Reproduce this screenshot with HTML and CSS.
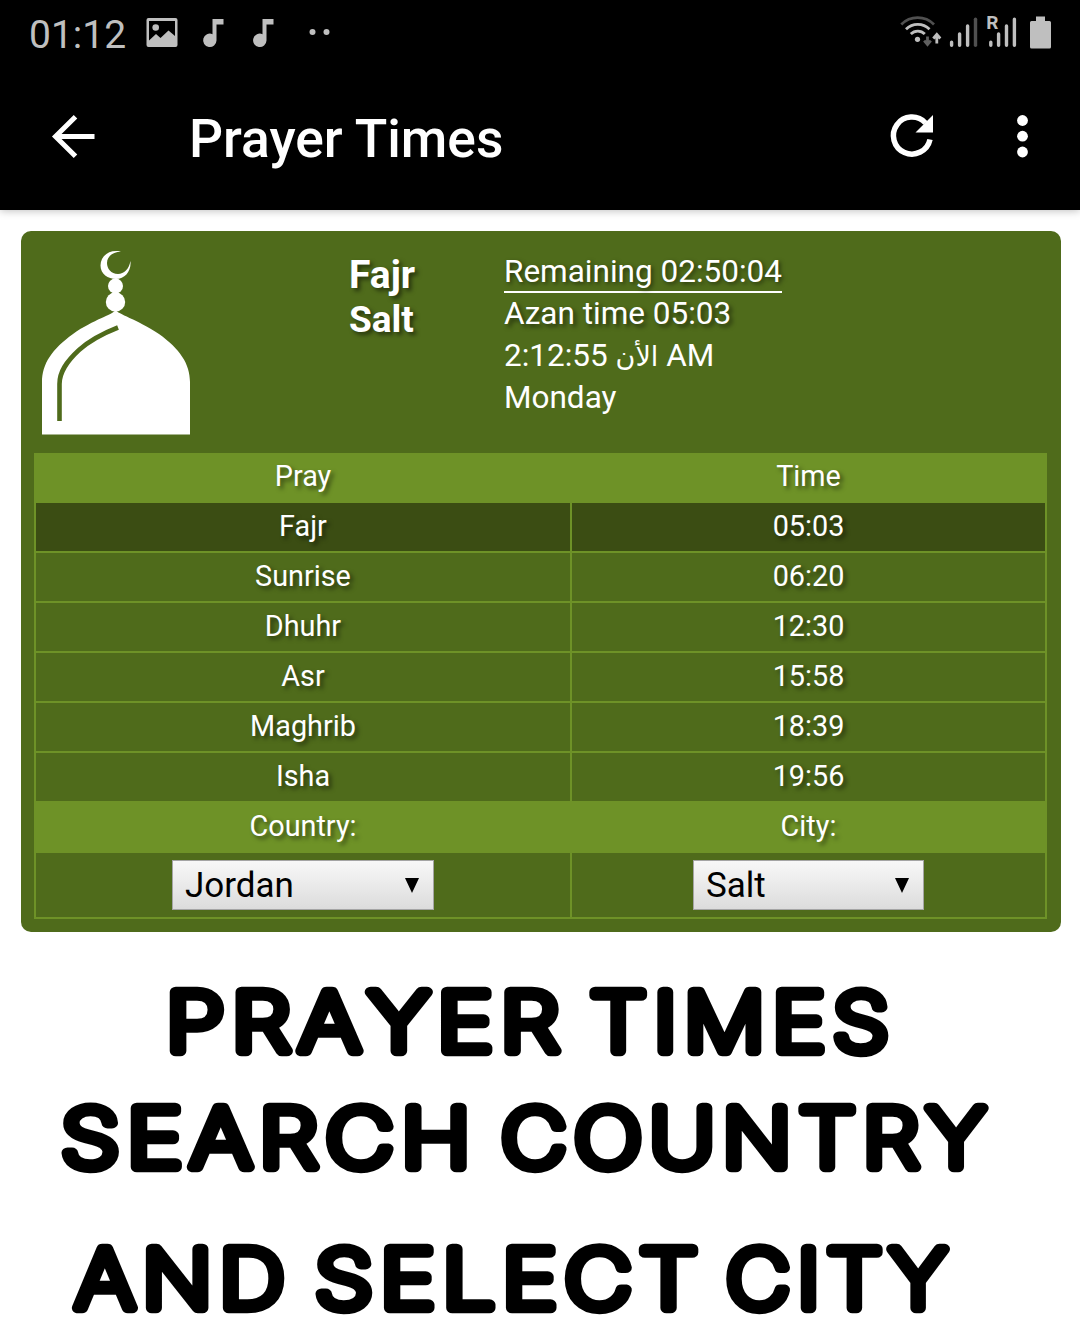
FILE: index.html
```
<!DOCTYPE html>
<html lang="en">
<head>
    <meta charset="UTF-8">
    <meta name="viewport" content="width=device-width, initial-scale=1.0">
    <title>Prayer Times</title>
    <link rel="stylesheet" href="styles.css">
</head>
<body>
    <header class="header">
        <div class="status-bar">
            <span class="clock">01:12</span>
            <svg class="icon-picture" width="32" height="30" viewBox="0 0 32 30">
                <path fill-rule="evenodd" d="M2.500 0h27a2 2 0 0 1 2 2v25a2 2 0 0 1-2 2h-27a2 2 0 0 1-2-2v-25a2 2 0 0 1 2-2zM3 3v19.500l7-6.500 4.500 4 8-7.500 6.500 5.500v-15z"/>
                <circle cx="9.700" cy="9.500" r="3.300"/>
            </svg>
            <svg class="icon-note" width="21" height="29" viewBox="0 0 21 29">
                <path d="M9.500 0h11v5.500h-7v16a6.700 6.700 0 1 1-4-6.300z"/>
            </svg>
            <svg class="icon-note" width="21" height="29" viewBox="0 0 21 29">
                <path d="M9.500 0h11v5.500h-7v16a6.700 6.700 0 1 1-4-6.300z"/>
            </svg>
            <svg class="icon-more" width="21" height="8" viewBox="0 0 21 8">
                <circle cx="3.500" cy="4" r="3"/>
                <circle cx="17.500" cy="4" r="3"/>
            </svg>
            <svg class="icon-signal" width="156" height="38" viewBox="0 0 156 38">
                <!-- wifi -->
                <g fill="none" stroke="#bfbfbf" stroke-width="2.800">
                    <path stroke="#505050" d="M1.300 11.500a23 23 0 0 1 32.700 0"/>
                    <path d="M6 16.300a16.500 16.500 0 0 1 23.500 0"/>
                    <path d="M10.800 21a9.800 9.800 0 0 1 14 0"/>
                    <path stroke="#606060" d="M27.500 23.500v8.500m-3.300-4.300 3.300 3.800 3.300-3.800"/>
                    <path d="M36.800 30.500v-9m-3.500 4 3.500-4 3.500 4"/>
                </g>
                <circle cx="17.500" cy="26.300" r="2.600"/>
                <!-- sim 1 and 2 -->
                <g stroke="#bfbfbf" stroke-width="3.400" stroke-linecap="round">
                    <path d="M51.600 29.300v3M59.600 21v11.300M67.600 13v19.300"/>
                    <path stroke="#505050" d="M75.500 6.300v26"/>
                    <path d="M90.800 29.300v3M98.600 21v11.300M106.500 13v19.300M114.400 6.300v26"/>
                </g>
                <text class="roaming" x="86.200" y="16">R</text>
                <!-- battery -->
                <path d="M136 3.500h9v4.500h4.500a1.500 1.500 0 0 1 1.500 1.500v24.500a1.500 1.500 0 0 1-1.500 1.500h-18a1.500 1.500 0 0 1-1.500-1.500v-24.500a1.500 1.500 0 0 1 1.500-1.500h4.500z"/>
            </svg>
        </div>
        <div class="app-bar">
            <svg class="back" width="43" height="43" viewBox="0 0 43 43">
                <path d="M23.500 1.700 3.500 21.500l20 19.800M3.500 21.500h39" fill="none" stroke="#fff" stroke-width="5"/>
            </svg>
            <h1 class="title">Prayer Times</h1>
            <svg class="refresh" width="44" height="44" viewBox="0 0 44 44">
                <path d="M40 25.500a18.500 18.500 0 1 1-4.500-16.500" fill="none" stroke="#fff" stroke-width="5.500"/>
                <path d="M43 1v17.500H25.500z" fill="#fff"/>
            </svg>
            <svg class="menu" width="12" height="44" viewBox="0 0 12 44">
                <circle cx="5.500" cy="6.500" r="5.400"/>
                <circle cx="5.500" cy="22.200" r="5.400"/>
                <circle cx="5.500" cy="38" r="5.400"/>
            </svg>
        </div>
    </header>

    <main class="card">
        <section class="summary">
            <svg class="mosque" width="148" height="185" viewBox="0 0 148 185">
                <path d="M79 1.500C66-1 58.500 7 58.500 15.500C58.500 24 66 29 74 29C83 29 89.500 21 88.500 11C87 19 82 24 76 24C69 24 65 18.500 65 13C65 7 70 2 79 1.500z"/>
                <circle cx="73.500" cy="36" r="7.500"/>
                <circle cx="73.500" cy="52" r="9.700"/>
                <path d="M73.500 60C76 64 94 69 117 84C138 99 148 114 148 132V184.500H0V132C0 114 10 99 31 84C52 69 71 65 73.500 60z"/>
                <path d="M76 77.500C62 83 47 91 37 100C24 112 17.500 122 17.500 134V171" class="groove"/>
            </svg>
            <div class="next">
                <div class="next-pray">Fajr</div>
                <div class="next-city">Salt</div>
            </div>
            <div class="info">
                <div><span class="remaining">Remaining 02:50:04</span></div>
                <div><span class="azan">Azan time 05:03</span></div>
                <div>2:12:55 <span class="arabic">الأن</span> AM</div>
                <div>Monday</div>
            </div>
        </section>

        <table class="times">
            <tr class="head"><th>Pray</th><th>Time</th></tr>
            <tr class="current"><td>Fajr</td><td>05:03</td></tr>
            <tr><td>Sunrise</td><td>06:20</td></tr>
            <tr><td>Dhuhr</td><td>12:30</td></tr>
            <tr><td>Asr</td><td>15:58</td></tr>
            <tr><td>Maghrib</td><td>18:39</td></tr>
            <tr><td>Isha</td><td>19:56</td></tr>
            <tr class="labels"><th>Country:</th><th>City:</th></tr>
            <tr class="pickers">
                <td>
                    <div class="picker country">
                        <select><option>Jordan</option></select>
                        <svg class="caret" width="14" height="15" viewBox="0 0 14 15"><path d="M0 0h14L7 15z"/></svg>
                    </div>
                </td>
                <td>
                    <div class="picker city">
                        <select><option>Salt</option></select>
                        <svg class="caret" width="14" height="15" viewBox="0 0 14 15"><path d="M0 0h14L7 15z"/></svg>
                    </div>
                </td>
            </tr>
        </table>
    </main>

    <!-- svg text so the thin letters can get a thick round outline -->
    <svg class="caption" width="1080" height="399" viewBox="0 932 1080 399">
        <text x="166" y="1051" textLength="401" lengthAdjust="spacingAndGlyphs">PRAYER</text>
        <text x="590" y="1051" textLength="306" lengthAdjust="spacingAndGlyphs">TIMES</text>
        <text x="61" y="1167" textLength="417" lengthAdjust="spacingAndGlyphs">SEARCH</text>
        <text x="501" y="1167" textLength="492" lengthAdjust="spacingAndGlyphs">COUNTRY</text>
        <text x="75" y="1308" textLength="217" lengthAdjust="spacingAndGlyphs">AND</text>
        <text x="315" y="1308" textLength="390" lengthAdjust="spacingAndGlyphs">SELECT</text>
        <text x="726" y="1308" textLength="228" lengthAdjust="spacingAndGlyphs">CITY</text>
    </svg>
</body>
</html>
```
FILE: styles.css
```
* {
    box-sizing: border-box;
}
body {
    margin: 0;
    background: #fff;
    font-family: Roboto, "Liberation Sans", sans-serif;
    overflow: hidden;
}
svg {
    display: block;
    flex: none;
    overflow: visible;
}
.header {
    height: 210px;
    background: #000;
    box-shadow: 0 1px 8px rgba(0, 0, 0, 0.25);
}
.status-bar {
    display: flex;
    align-items: flex-start;
    height: 66px;
    padding-left: 29px;
    fill: #bfbfbf;
}
.clock {
    width: 117px;
    padding-top: 12px;
    color: #bfbfbf;
    font-size: 39px;
    line-height: 46px;
}
.icon-picture {
    margin-top: 18px;
}
.icon-note {
    margin: 19px 0 0 25px;
}
.icon-note + .icon-note {
    margin-left: 29px;
}
.icon-more {
    margin: 28px 0 0 35px;
}
.icon-signal {
    margin: 13px 0 0 auto;
    margin-right: 24px;
}
.roaming {
    font-size: 19px;
    font-weight: 700;
    stroke: #000;
    stroke-width: 3px;
    paint-order: stroke;
}
.app-bar {
    display: flex;
    align-items: center;
    height: 144px;
    padding: 0 51px 4px 52px;
}
.title {
    flex: 1;
    margin: 5px 0 0 94px;
    color: #fff;
    font-size: 53.4px;
    font-weight: 500;
    line-height: 62px;
    white-space: nowrap;
}
.menu {
    margin-left: 83px;
    fill: #fff;
}
.card {
    width: 1040px;
    height: 701px;
    margin: 21px 0 0 21px;
    padding: 0 14px 13px 13px;
    background: #4f6b1b;
    border-radius: 10px;
    color: #fff;
}
.summary {
    display: flex;
    height: 222px;
    padding: 19px 0 0 8px;
}
.mosque {
    fill: #fff;
}
.groove {
    fill: none;
    stroke: #4f6b1b;
    stroke-width: 4.6px;
}
.next {
    width: 155px;
    margin-left: 159px;
    font-weight: 700;
    line-height: 45px;
    text-shadow: 3px 3px 4px rgba(0, 0, 0, 0.5);
}
.next-pray {
    padding-top: 3px;
    font-size: 39px;
    line-height: 44px;
}
.next-city {
    font-size: 37px;
}
.info {
    padding-top: 1px;
    font-size: 31.5px;
    line-height: 42px;
    white-space: nowrap;
}
.remaining {
    display: inline-block;
    height: 42px;
    border-bottom: 2px solid #fff;
    text-shadow: 2px 2px 4px rgba(0, 0, 0, 0.5);
    vertical-align: top;
}
.azan {
    text-shadow: 3px 3px 4px rgba(0, 0, 0, 0.5);
}
.arabic {
    font-family: "DejaVu Sans", sans-serif;
    font-size: 27px;
    line-height: 1;
}
.times {
    width: 1013px;
    border-collapse: collapse;
    table-layout: fixed;
    font-size: 28.8px;
    text-shadow: 3px 3px 4px rgba(0, 0, 0, 0.5);
}
.times th,
.times td {
    height: 50px;
    padding: 0 0 2px;
    border: 2px solid #6e9227;
    font-weight: 400;
    line-height: 34px;
    text-align: center;
}
.times th:first-child {
    width: 536px;
}
.times .head th {
    height: 48px;
    padding-bottom: 4px;
}
.times .head,
.times .labels {
    background: #6e9227;
}
.times .current {
    background: #3b4d13;
}
.times .pickers td {
    height: 66px;
    padding: 0;
}
.picker {
    position: relative;
    height: 50px;
    margin: 0 auto;
}
.country {
    width: 262px;
}
.city {
    width: 231px;
}
.picker select {
    display: block;
    width: 100%;
    height: 100%;
    padding: 0 12px;
    appearance: none;
    border: 1px solid #a5a5a5;
    border-radius: 0;
    background: linear-gradient(#f8f8f8, #dcdcdc);
    color: #000;
    font: 35px Roboto, sans-serif;
}
.caret {
    position: absolute;
    top: 18px;
    right: 15.5px;
    fill: #000;
}
.caption {
    font-family: Inter, sans-serif;
    font-size: 80.5px;
    font-weight: 150;
    font-kerning: none;
    letter-spacing: 6.5px;
    fill: #000;
    stroke: #000;
    stroke-width: 10.5px;
    stroke-linejoin: round;
    stroke-linecap: round;
}
```
